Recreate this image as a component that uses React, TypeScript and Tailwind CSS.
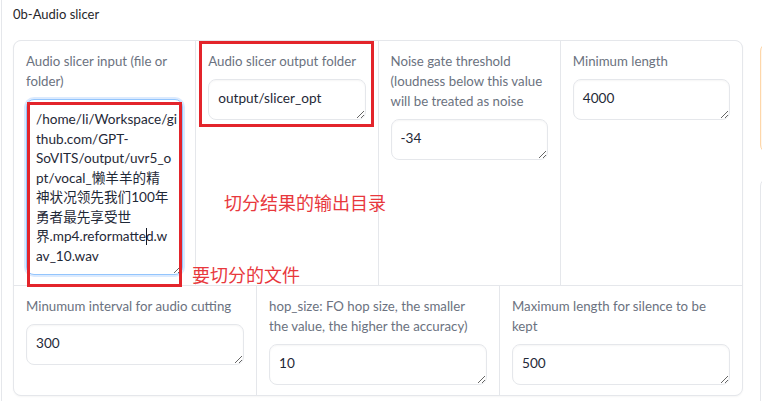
import React from "react";

const FONT = "font-['Lato','Noto_Sans_CJK_SC',sans-serif]";

function Label({ lines }: { lines: string[] }) {
  return (
    <div className="text-[13.25px] leading-5 text-[#6b7280]">
      {lines.map((l, i) => (
        <div key={i} className="whitespace-nowrap">
          {l}
        </div>
      ))}
    </div>
  );
}

function Box({ value, className = "" }: { value: string; className?: string }) {
  return (
    <textarea
      readOnly
      defaultValue={value}
      className={
        "mt-2 block w-full h-[41px] resize-y overflow-hidden whitespace-pre rounded-lg border border-[#e5e7eb] bg-white pl-[9px] pr-1 py-[9px] text-[13.6px] leading-[19.5px] text-[#1f2937] shadow-[inset_0_1px_2px_rgba(0,0,0,0.04)] outline-none " +
        FONT +
        " " +
        className
      }
    />
  );
}

export default function App() {
  const path =
    "/home/li/Workspace/gi\nthub.com/GPT-\nSoVITS/output/uvr5_o\npt/vocal_懒羊羊的精\n神状况领先我们100年\n勇者最先享受世\n界.mp4.reformatted.w\nav_10.wav";
  return (
    <div className={"relative w-[762px] h-[401px] overflow-hidden bg-white " + FONT}>
      <div className="ml-px h-full border-l border-[#e5e7eb] pl-[11px] pt-1">
        <div className="text-[13px] leading-5 text-[#27272a]">0b-Audio slicer</div>
        <div className="mt-4 flex items-start gap-[17px]">
          <div className="w-[730px] shrink-0 overflow-hidden rounded-lg border border-[#e5e7eb] bg-[#e5e7eb] shadow-[0_1px_2px_rgba(0,0,0,0.04)] flex flex-col gap-px">
            <div className="grid grid-cols-4 gap-px">
              <div className="bg-white px-3 pt-[10px] pb-[10px]">
                <Label lines={["Audio slicer input (file or", "folder)"]} />
                <textarea
                  readOnly
                  defaultValue={path}
                  className={
                    "mt-2 block w-full h-[176px] resize-y overflow-hidden whitespace-pre rounded-lg border border-[#93c5fd] bg-white pl-[9px] pr-1 pt-[10px] text-[13.6px] leading-[19.5px] text-[#1f2937] shadow-[0_0_0_2px_#dbeafe] outline-none " +
                    FONT
                  }
                />
              </div>
              <div className="bg-white px-3 pt-[10px] pb-[10px]">
                <Label lines={["Audio slicer output folder"]} />
                <Box value="output/slicer_opt" />
              </div>
              <div className="bg-white px-3 pt-[10px] pb-[10px]">
                <Label
                  lines={[
                    "Noise gate threshold",
                    "(loudness below this value",
                    "will be treated as noise",
                  ]}
                />
                <Box value="-34" />
              </div>
              <div className="bg-white px-3 pt-[10px] pb-[10px]">
                <Label lines={["Minimum length"]} />
                <Box value="4000" />
              </div>
            </div>
            <div className="grid grid-cols-3 gap-px">
              <div className="bg-white px-3 pt-[10px] pb-[10px]">
                <Label lines={["Minumum interval for audio cutting"]} />
                <Box value="300" />
              </div>
              <div className="bg-white px-3 pt-[10px] pb-[10px]">
                <Label
                  lines={["hop_size: FO hop size, the smaller", "the value, the higher the accuracy)"]}
                />
                <Box value="10" />
              </div>
              <div className="bg-white px-3 pt-[10px] pb-[10px]">
                <Label lines={["Maximum length for silence to be", "kept"]} />
                <Box value="500" />
              </div>
            </div>
          </div>
          <div className="flex w-[300px] shrink-0 flex-col">
            <div className="mt-[3px] h-[110px] rounded-lg border border-[#fed7aa] bg-[#fff7ed]" />
            <div className="mt-[25px] h-[300px] rounded-lg border border-[#e5e7eb] bg-white" />
          </div>
        </div>
      </div>

      {/* text caret in the focused textarea */}
      <div className="absolute left-[146px] top-[228px] h-[17px] w-px bg-[#111827]" />

      {/* annotations */}
      <div className="absolute left-[27px] top-[102px] h-[185px] w-[155px] border-[3px] border-[#e3242b]" />
      <div className="absolute left-[199px] top-[41px] h-[86px] w-[175px] border-[3px] border-[#e3242b]" />
      <div className="absolute left-[224px] top-[191px] text-[18px] leading-6 text-[#e8383d] whitespace-nowrap">
        切分结果的输出目录
      </div>
      <div className="absolute left-[192px] top-[263px] text-[18px] leading-6 text-[#e8383d] whitespace-nowrap">
        要切分的文件
      </div>
    </div>
  );
}
